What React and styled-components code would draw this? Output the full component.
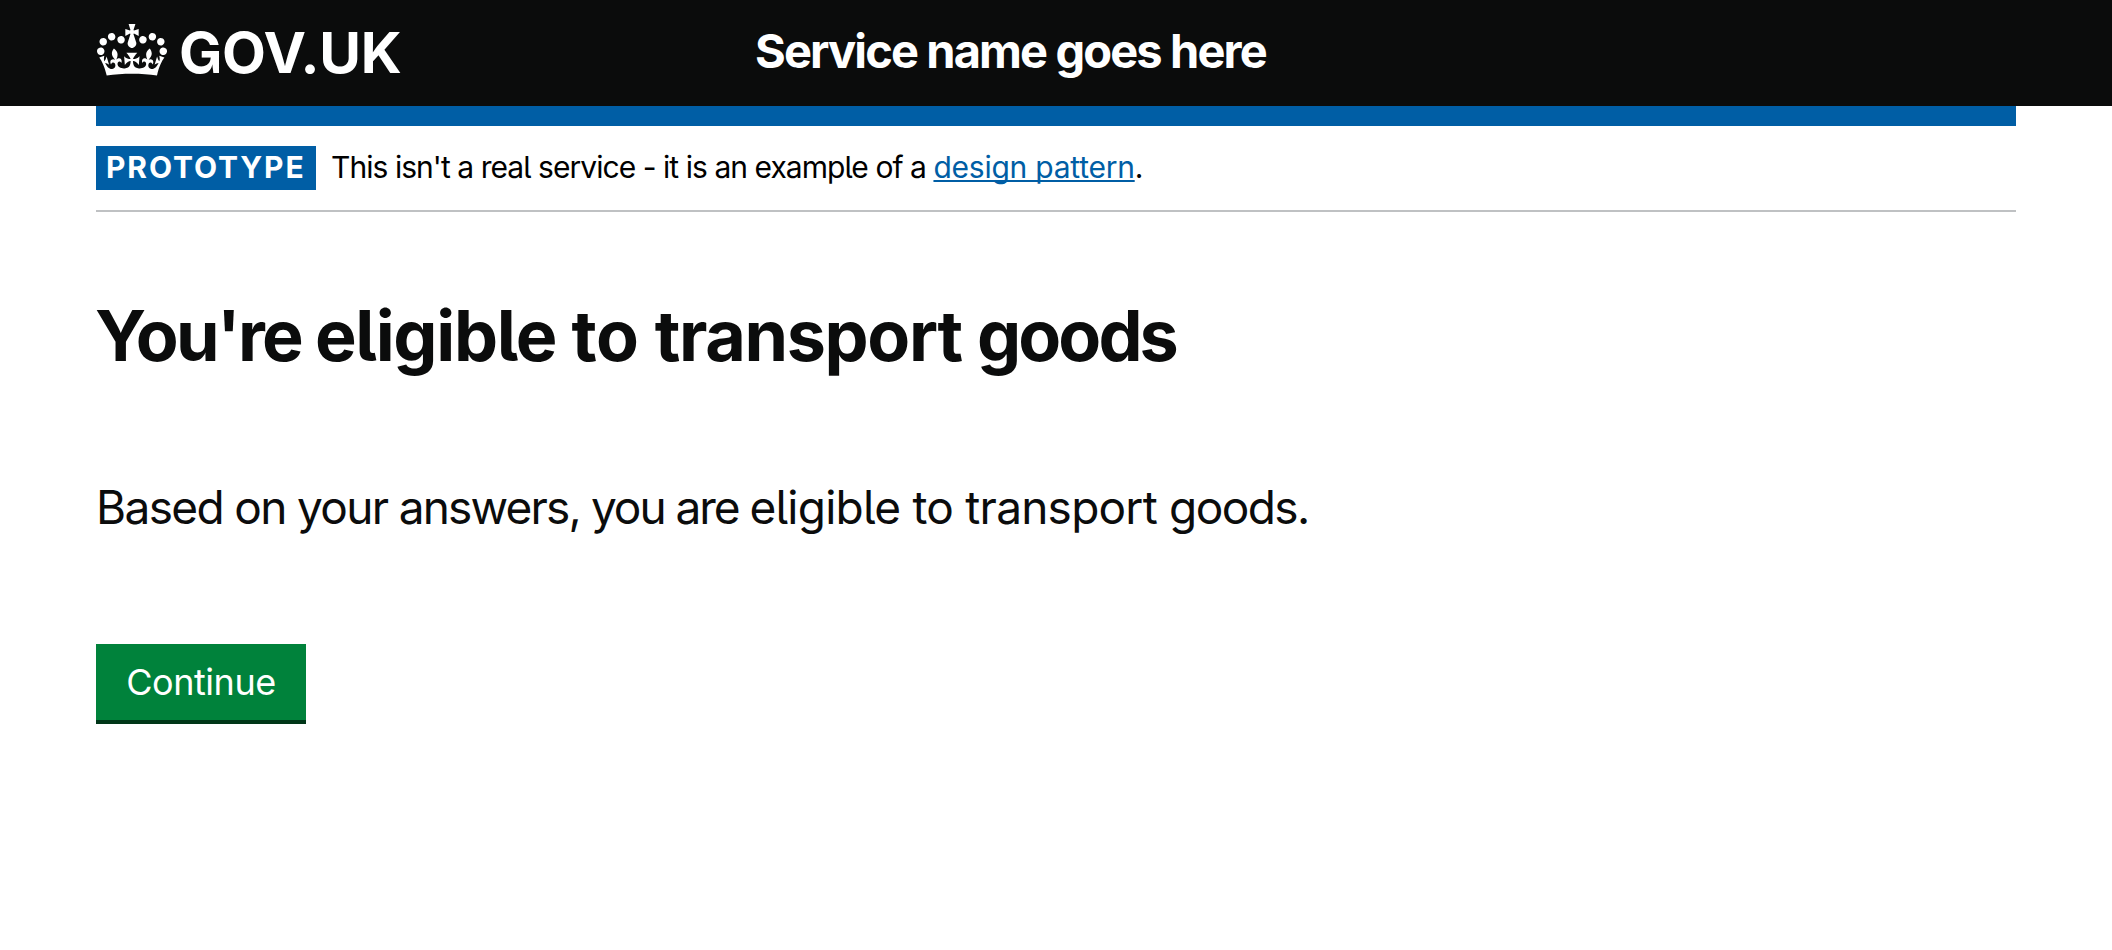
import React from "react";
import styled, { createGlobalStyle } from "styled-components";

const GlobalStyle = createGlobalStyle`
  body {
    margin: 0;
    background: #fff;
    color: #0b0c0c;
    font-family: Inter, "Liberation Sans", sans-serif;
    font-feature-settings: "cv05" 1, "cv10" 1;
  }
`;

const Header = styled.header`
  height: 106px;
  background: #0b0c0c;
  color: #fff;
`;

const Container = styled.div`
  margin: 0 96px;
`;

const HeaderInner = styled(Container)`
  display: grid;
  grid-template-columns: 659px 1fr;
  align-items: start;
`;

const HomeLink = styled.a`
  display: flex;
  align-items: flex-start;
  padding-top: 23px;
  color: inherit;
  text-decoration: none;
`;

const CrownIcon = styled.svg`
  display: block;
  width: 70px;
  height: 52px;
  margin: 1px 12px 0 1px;
  fill: currentColor;
`;

const LogoText = styled.span`
  font-size: 57px;
  line-height: 60px;
  font-weight: 700;
  letter-spacing: -0.2px;
`;

const ServiceName = styled.span`
  padding-top: 23px;
  font-size: 47px;
  line-height: 56px;
  font-weight: 700;
  letter-spacing: -1.88px;
`;

const AccentBar = styled.div`
  height: 20px;
  background: #005ea5;
`;

const PhaseBanner = styled.div`
  display: flex;
  align-items: flex-start;
  padding: 20px 0;
  border-bottom: 2px solid #bfc1c3;
`;

const PhaseTag = styled.strong`
  box-sizing: border-box;
  width: 220px;
  height: 44px;
  padding-left: 10px;
  margin-right: 15px;
  background: #005ea5;
  color: #fff;
  font-size: 30px;
  line-height: 42px;
  font-weight: 700;
  letter-spacing: 1.9px;
`;

const PhaseText = styled.span`
  color: #000;
  font-size: 30px;
  line-height: 42px;
  letter-spacing: -0.95px;
`;

const Link = styled.a`
  color: #005ea5;
  letter-spacing: -0.24px;
  text-decoration: underline;
  text-decoration-thickness: 2px;
  text-decoration-skip-ink: none;
  text-underline-offset: 2px;
`;

const Heading = styled.h1`
  margin: 84px 0 0 -1px;
  font-size: 70px;
  line-height: 80px;
  font-weight: 700;
`;

const Lead = styled.p`
  margin: 101px 0 107px;
  font-size: 46px;
  line-height: 60px;
`;

const Tracked = styled.span`
  letter-spacing: ${({ $by }) => $by}px;
`;

const Button = styled.button`
  display: block;
  box-sizing: border-box;
  width: 210px;
  height: 80px;
  padding: 0;
  border: 0;
  border-bottom: 4px solid #003618;
  background: #00823b;
  color: #fff;
  font: inherit;
  font-feature-settings: inherit;
  font-size: 36px;
  letter-spacing: -0.45px;
`;

const Crown = () => (
  <CrownIcon viewBox="0 0 132 97" preserveAspectRatio="none" aria-hidden="true">
    <path d="M25 30.2c3.5 1.5 7.7-.2 9.1-3.7 1.5-3.6-.2-7.8-3.9-9.2-3.6-1.4-7.6.3-9.1 3.9-1.4 3.5.3 7.5 3.9 9zM9 39.5c3.6 1.5 7.8-.2 9.2-3.7 1.5-3.6-.2-7.8-3.9-9.1-3.6-1.5-7.6.2-9.1 3.8-1.4 3.5.3 7.5 3.8 9zM4.4 57.2c3.5 1.5 7.7-.2 9.1-3.8 1.5-3.6-.2-7.7-3.9-9.1-3.5-1.5-7.6.3-9.1 3.8-1.4 3.5.3 7.6 3.9 9.1zm38.3-21.4c3.5 1.5 7.7-.2 9.1-3.8 1.5-3.6-.2-7.7-3.9-9.1-3.6-1.5-7.6.3-9.1 3.8-1.3 3.6.4 7.7 3.9 9.1zm64.4-5.6c-3.6 1.5-7.8-.2-9.1-3.7-1.5-3.6.2-7.8 3.8-9.2 3.6-1.4 7.7.3 9.2 3.9 1.3 3.5-.4 7.5-3.9 9zm15.9 9.3c-3.6 1.5-7.7-.2-9.1-3.7-1.5-3.6.2-7.8 3.7-9.1 3.6-1.5 7.7.2 9.2 3.8 1.5 3.5-.3 7.5-3.8 9zm4.7 17.7c-3.6 1.5-7.8-.2-9.2-3.8-1.5-3.6.2-7.7 3.9-9.1 3.6-1.5 7.7.3 9.2 3.8 1.3 3.5-.4 7.6-3.9 9.1zM89.3 35.8c-3.6 1.5-7.8-.2-9.2-3.8-1.4-3.6.2-7.7 3.9-9.1 3.6-1.5 7.7.3 9.2 3.8 1.4 3.6-.3 7.7-3.9 9.1zM69.7 17.7l8.9 4.7V9.3l-8.9 2.8c-.2-.3-.5-.6-.9-.9L72.4 0H59.6l3.5 11.2c-.3.3-.6.5-.9.9l-8.8-2.8v13.1l8.8-4.7c.3.3.6.7.9.9l-5 15.4v.1c-.2.8-.4 1.6-.4 2.4 0 4.1 3.1 7.5 7 8.1h.2c.3 0 .7.1 1 .1.4 0 .7 0 1-.1h.2c4-.6 7.1-4.1 7.1-8.1 0-.8-.1-1.7-.4-2.4V34l-5.1-15.4c.4-.2.7-.6 1-.9zM66 92.8c16.9 0 32.8 1.1 47.1 3.2 4-16.9 8.9-26.7 14-33.5l-9.6-3.4c1 4.9 1.1 7.2 0 10.2-1.5-1.4-3-4.3-4.2-8.7L108.6 76c2.8-2 5-3.2 7.5-3.3-4.4 9.4-10 11.9-13.6 11.2-4.3-.8-6.3-4.6-5.6-7.9 1-4.7 5.7-5.9 8-.5 4.3-8.7-3-11.4-7.6-8.8 7.1-7.2 7.9-13.5 2.1-21.1-8 6.1-8.1 12.3-4.5 20.8-4.7-5.4-12.1-2.5-9.5 6.2 3.4-5.2 7.9-2 7.2 3.1-.6 4.3-6.4 7.8-13.5 7.2-10.3-.9-10.9-8-11.2-13.8 2.5-.5 7.1 1.8 11 7.3L80.2 60c-4.1 4.4-8 5.3-12.3 5.4 1.4-4.4 8-11.6 8-11.6H55.5s6.4 7.2 7.9 11.6c-4.2-.1-8-1-12.3-5.4l1.4 16.4c3.9-5.5 8.5-7.7 10.9-7.3-.3 5.8-.9 12.8-11.1 13.8-7.2.6-12.9-2.9-13.5-7.2-.7-5 3.8-8.3 7.1-3.1 2.7-8.7-4.6-11.6-9.4-6.2 3.7-8.5 3.6-14.7-4.6-20.8-5.8 7.6-5 13.9 2.2 21.1-4.7-2.6-11.9.1-7.7 8.8 2.3-5.5 7.1-4.2 8.1.5.7 3.3-1.3 7.1-5.7 7.9-3.5.7-9-1.8-13.5-11.2 2.5.1 4.7 1.3 7.5 3.3l-4.7-15.4c-1.2 4.4-2.7 7.2-4.3 8.7-1.1-3-.9-5.3 0-10.2l-9.5 3.4c5 6.9 9.9 16.7 14 33.5 14.8-2.1 30.8-3.2 47.7-3.2z" />
  </CrownIcon>
);

export default function App() {
  return (
    <>
      <GlobalStyle />
      <Header>
        <HeaderInner>
          <HomeLink href="#">
            <Crown />
            <LogoText>GOV.UK</LogoText>
          </HomeLink>
          <ServiceName>Service name goes here</ServiceName>
        </HeaderInner>
      </Header>
      <Container>
        <AccentBar />
        <PhaseBanner>
          <PhaseTag>PROTOTYPE</PhaseTag>
          <PhaseText>
            This isn't a real service - it is an example of a <Link href="#">design pattern</Link>.
          </PhaseText>
        </PhaseBanner>
        <main>
          <Heading>
            <Tracked $by={-2.7}>You're </Tracked>
            <Tracked $by={-1.3}>eligible </Tracked>
            <Tracked $by={-0.4}>to </Tracked>
            <Tracked $by={-1.34}>transport </Tracked>
            <Tracked $by={-2.9}>goods</Tracked>
          </Heading>
          <Lead>
            <Tracked $by={-1.65}>Based on your </Tracked>
            <Tracked $by={-1.83}>answers, </Tracked>
            <Tracked $by={-2.05}>you are </Tracked>
            <Tracked $by={-0.76}>eligible to transport </Tracked>
            <Tracked $by={-1.6}>goods.</Tracked>
          </Lead>
          <Button type="button">Continue</Button>
        </main>
      </Container>
    </>
  );
}
